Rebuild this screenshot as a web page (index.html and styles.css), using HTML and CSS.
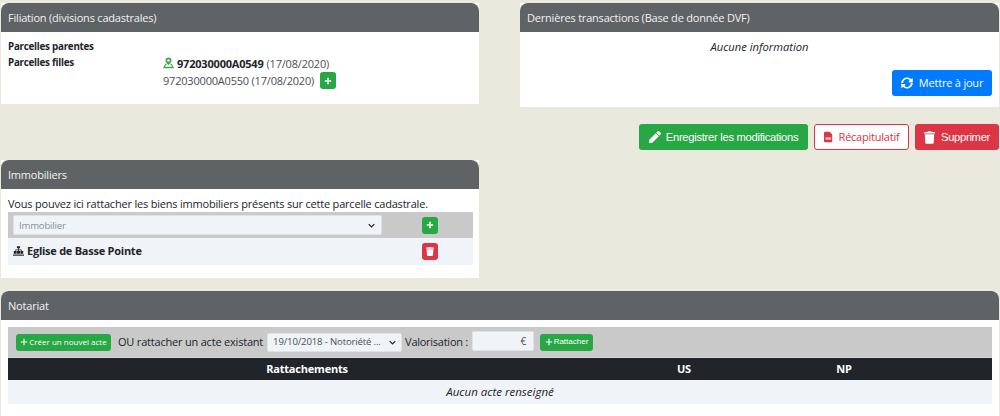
FILE: index.html
```html
<!DOCTYPE html>
<html lang="fr">
<head>
<meta charset="utf-8">
<title>Parcelle</title>
<link rel="stylesheet" href="styles.css">
</head>
<body>
<div class="top-row">
  <section class="panel panel-filiation">
    <h2 class="panel-head">Filiation (divisions cadastrales)</h2>
    <div class="filiation-body">
      <div class="fil-row"><strong class="fil-label">Parcelles parentes</strong></div>
      <div class="fil-row">
        <strong class="fil-label">Parcelles filles</strong>
        <div class="fil-values">
          <div class="fil-line">
            <svg class="pin" viewBox="0 0 16 16"><path d="M8 0a4.400 4.400 0 0 0-4.400 4.400C3.600 7.400 8 11 8 11s4.400-3.600 4.400-6.600A4.400 4.400 0 0 0 8 0zm0 6.300a1.900 1.900 0 1 1 0-3.800 1.900 1.900 0 0 1 0 3.800z"/><path d="M3.200 9.200 0 15.500h16l-3.200-6.300h-2v1.400l1.200 0 1 2.900H3l1-2.900 1.200 0V9.200z"/></svg>
            <strong class="fil-strong">972030000A0549</strong>
            <span>(17/08/2020)</span>
          </div>
          <div class="fil-line">
            <span>972030000A0550 (17/08/2020)</span>
            <span class="btn-mini green fil-add"><svg class="ic-plus" viewBox="0 0 10 10"><path d="M4 1h2v3h3v2H6v3H4V6H1V4h3z"/></svg></span>
          </div>
        </div>
      </div>
    </div>
  </section>
  <section class="panel panel-dvf">
    <h2 class="panel-head">Dernières transactions (Base de donnée DVF)</h2>
    <div class="dvf-body">
      <p class="dvf-empty">Aucune information</p>
      <div class="dvf-actions">
        <span class="btn blue btn-update">
          <svg class="ic" viewBox="0 0 512 512"><path d="M370.700 133.300A168 168 0 0 0 89.800 241.100a12 12 0 0 1-11.900 11H20.600a12 12 0 0 1-11.800-14.200C30.600 114.700 139 24 256 24c66 0 125.900 26.700 169.400 69.800L464 56c15-15 40-4.400 40 17v134a24 24 0 0 1-24 24H345.900c-21.400 0-32-25.900-17-41zM32 296h134.100c21.400 0 32 25.900 17 41l-41.800 41.700a168 168 0 0 0 280.900-107.800 12 12 0 0 1 11.900-11h57.300a12 12 0 0 1 11.800 14.200C481.400 397.300 373 488 256 488c-66 0-125.900-26.700-169.400-69.800L48 456c-15 15-40 4.400-40-17V305a24 24 0 0 1 24-24z"/></svg>
          Mettre à jour
        </span>
      </div>
    </div>
  </section>
</div>

<div class="actions">
  <span class="btn green btn-save">
    <svg class="ic" viewBox="0 0 512 512"><path d="M290.700 93.200 418.800 221.300 140.600 499.500 26.400 512C11.100 513.700-1.700 500.800 0 485.500L12.700 371.300zM498 74.100 437.900 14c-18.700-18.700-49.100-18.700-67.900 0l-56.500 56.500 128.100 128.100L498 142c18.700-18.700 18.700-49.200 0-67.900z"/></svg>
    Enregistrer les modifications
  </span>
  <span class="btn outline-red btn-recap">
    <svg class="ic-pdf" viewBox="0 0 12 14"><path d="M1.500 0H7.500L11 3.500V12.500A1.500 1.500 0 0 1 9.500 14H1.500A1.500 1.500 0 0 1 0 12.500V1.500A1.500 1.500 0 0 1 1.500 0z"/><rect class="pdf-band" x="2" y="7.500" width="7.500" height="3"/></svg>
    Récapitulatif
  </span>
  <span class="btn red btn-del">
    <svg class="ic ic-tall" viewBox="0 0 448 512"><path d="M432 32H312l-9.400-18.700A24 24 0 0 0 281.100 0H166.800a23.700 23.700 0 0 0-21.400 13.300L136 32H16A16 16 0 0 0 0 48v32a16 16 0 0 0 16 16h416a16 16 0 0 0 16-16V48a16 16 0 0 0-16-16zM53.200 467a48 48 0 0 0 47.900 45h245.800a48 48 0 0 0 47.900-45L416 128H32z"/></svg>
    Supprimer
  </span>
</div>

<section class="panel panel-immo">
  <h2 class="panel-head">Immobiliers</h2>
  <div class="immo-body">
    <p class="immo-intro">Vous pouvez ici rattacher les biens immobiliers présents sur cette parcelle cadastrale.</p>
    <div class="immo-form">
      <div class="select select-immo">
        <span class="select-ph">Immobilier</span>
        <svg class="chev" viewBox="0 0 10 6"><path d="M1 1l4 4 4-4"/></svg>
      </div>
      <span class="btn-mini green immo-btn"><svg class="ic-plus" viewBox="0 0 10 10"><path d="M4 1h2v3h3v2H6v3H4V6H1V4h3z"/></svg></span>
    </div>
    <div class="immo-row">
      <div class="immo-name">
        <svg class="ic-site" viewBox="0 0 14 12"><path d="M5 0h4v2.500H7.500V4H11v2h2v3.500H9.500V6H10V5H7.500v1H9v3.500H5V6h1.500V5H4v1h.5v3.500H1V6h2V4h3.500V2.500H5z"/><path d="M0 10.500h14V12H0z"/></svg>
        <strong>Eglise de Basse Pointe</strong>
      </div>
      <span class="btn-mini red immo-btn"><svg class="ic-trash" viewBox="0 0 448 512"><path d="M432 32H312l-9.400-18.700A24 24 0 0 0 281.100 0H166.800a23.700 23.700 0 0 0-21.400 13.300L136 32H16A16 16 0 0 0 0 48v32a16 16 0 0 0 16 16h416a16 16 0 0 0 16-16V48a16 16 0 0 0-16-16zM53.200 467a48 48 0 0 0 47.900 45h245.800a48 48 0 0 0 47.900-45L416 128H32z"/></svg></span>
    </div>
  </div>
</section>

<section class="panel panel-notariat">
  <h2 class="panel-head">Notariat</h2>
  <div class="notariat-body">
    <div class="not-bar">
      <span class="btn-small green btn-new"><svg class="ic-plus-s" viewBox="0 0 10 10"><path d="M4.300 1h1.400v3.300H9v1.400H5.700V9H4.300V5.700H1V4.300h3.300z"/></svg>Créer un nouvel acte</span>
      <span class="not-text not-or">OU rattacher un acte existant</span>
      <div class="select select-acte">
        <span>19/10/2018 - Notoriété ...</span>
        <svg class="chev" viewBox="0 0 10 6"><path d="M1 1l4 4 4-4"/></svg>
      </div>
      <span class="not-text not-val">Valorisation :</span>
      <div class="euro-input">€</div>
      <span class="btn-small green btn-attach"><svg class="ic-plus-s" viewBox="0 0 10 10"><path d="M4.300 1h1.400v3.300H9v1.400H5.700V9H4.300V5.700H1V4.300h3.300z"/></svg>Rattacher</span>
    </div>
    <div class="not-head">
      <span>Rattachements</span>
      <span>US</span>
      <span>NP</span>
      <span></span>
    </div>
    <div class="not-empty">Aucun acte renseigné</div>
  </div>
</section>
</body>
</html>
```

FILE: styles.css
```css
* { box-sizing: border-box; }

html, body { height: 416px; overflow: hidden; }

body {
  margin: 0;
  padding: 3px 1px 0;
  background: #e9e9de;
  color: #212529;
  font-family: "Open Sans", "Liberation Sans", sans-serif;
  font-size: 11px;
  letter-spacing: -.2px;
  line-height: 16px;
}

.top-row {
  display: grid;
  grid-template-columns: 478px 479px;
  column-gap: 41px;
  align-items: start;
}

.panel { background: #fff; }

.panel-head {
  margin: 0;
  height: 29px;
  padding: 0 7px;
  display: flex;
  align-items: center;
  background: #606365;
  border-radius: 8px 8px 0 0;
  color: #f1f1f1;
  font-size: 11px;
  font-weight: 400;
}

.panel-filiation { height: 101px; }
.panel-dvf { height: 104px; }

.filiation-body { padding: 7px 7px 0; }

.fil-row { display: flex; height: 16px; }
.fil-label { width: 155px; flex: none; font-size: 9.800px; letter-spacing: -.25px; font-weight: 700; line-height: 16px; }

.fil-values { color: #4b4f53; }
.fil-line { display: flex; align-items: center; gap: 3px; height: 17px; white-space: nowrap; }
.fil-strong { color: #212529; }

.pin { width: 11px; height: 12px; fill: #3fa64a; margin-bottom: 2px; }

.fil-add { margin-left: 3px; }

.dvf-body { padding: 6px 7px 0; }
.dvf-empty { margin: 0; height: 32px; padding-top: 1px; text-align: center; font-style: italic; font-size: 11.200px; letter-spacing: 0; line-height: 15px; }
.dvf-actions { display: flex; justify-content: flex-end; }

.btn {
  display: inline-flex;
  align-items: center;
  justify-content: center;
  gap: 6px;
  height: 26px;
  border-radius: 3px;
  color: #fff;
  font-family: "Liberation Sans", Arial, sans-serif;
  font-size: 11.200px;
  letter-spacing: -.28px;
  white-space: nowrap;
}

.ic { width: 12px; height: 12px; fill: currentColor; flex: none; }
.ic-tall { width: 11px; height: 13px; }
.ic-pdf { width: 9px; height: 12px; fill: #dc3545; flex: none; }
.pdf-band { fill: #fff; opacity: .7; }

.blue { background: #007bff; }
.green { background: #28a745; }
.red { background: #dc3545; }

.btn-update {
  width: 100px;
  font-family: "Open Sans", sans-serif;
  font-size: 11px;
  letter-spacing: -.2px;
}

.actions {
  display: flex;
  justify-content: flex-end;
  gap: 6px;
  margin-top: 17px;
}
.btn-save { width: 169px; gap: 5px; }
.btn-recap { width: 95px; font-family: "Open Sans", sans-serif; font-size: 11px; letter-spacing: -.23px; }
.btn-del { width: 84px; }
.outline-red { background: #fff; color: #dc3545; border: 1px solid #dc3545; }

.btn-mini {
  display: inline-flex;
  align-items: center;
  justify-content: center;
  width: 16px;
  height: 17px;
  border-radius: 3px;
  flex: none;
}
.ic-plus { width: 8px; height: 8px; fill: #fff; }
.ic-trash { width: 8px; height: 9px; fill: #fff; }

.panel-immo { width: 478px; height: 118px; margin-top: 10px; }

.immo-body { padding: 6px 6px 0 7px; }
.immo-intro { margin: 0; line-height: 17px; white-space: nowrap; }

.immo-form {
  display: flex;
  align-items: center;
  height: 26px;
  background: #c9c9c9;
  padding: 0 35px 0 5px;
}
.immo-btn { margin-left: auto; }

.select {
  display: flex;
  align-items: center;
  justify-content: space-between;
  border: 1px solid #dfe3e8;
  border-radius: 2px;
}
.select-immo {
  width: 369px;
  height: 20px;
  padding: 0 6px 0 5px;
  background: #f0f4f8;
  font-size: 9.600px;
}
.select-ph { color: #8a9097; padding-top: 1px; }
.chev { width: 7px; height: 5px; fill: none; stroke: #212529; stroke-width: 1.800; flex: none; }

.immo-row {
  display: flex;
  align-items: center;
  height: 27px;
  background: #f0f4f8;
  padding: 0 35px 0 5px;
}
.immo-name { display: flex; align-items: center; gap: 3px; margin-bottom: 2px; letter-spacing: -.25px; }
.ic-site { width: 11px; height: 10px; fill: #212529; }

.panel-notariat { margin-top: 13px; height: 125px; border-radius: 8px 8px 0 0; }

.notariat-body { padding: 7px 7px 0; }

.not-bar {
  display: flex;
  align-items: center;
  height: 31px;
  background: #c9c9c9;
  padding: 0 0 0 8px;
  border-bottom: 1px solid #d6d6d6;
}
.not-or { margin-left: 7px; }
.not-val { margin-left: 3px; letter-spacing: -.26px; }

.btn-small {
  display: inline-flex;
  align-items: center;
  justify-content: center;
  height: 17px;
  border-radius: 3px;
  color: #fff;
  font-size: 8px;
  letter-spacing: 0;
  white-space: nowrap;
  gap: 1px;
}
.ic-plus-s { width: 8px; height: 8px; fill: #fff; flex: none; }
.btn-new { width: 95px; }
.btn-attach { width: 53px; margin-left: 6px; font-family: "Liberation Sans", Arial, sans-serif; }

.select-acte {
  width: 135px;
  height: 19px;
  margin-left: 4px;
  padding: 0 5px;
  background: #f0f4f8;
  font-size: 9.600px;
  letter-spacing: -.16px;
  color: #4b4f53;
  white-space: nowrap;
}
.euro-input {
  width: 62px;
  height: 20px;
  margin-left: 4px;
  margin-bottom: 2px;
  padding-right: 7px;
  background: #f0f4f8;
  border: 1px solid #dfe3e8;
  border-radius: 2px;
  text-align: right;
  font-size: 10px;
  line-height: 18px;
  color: #4b4f53;
}

.not-head {
  display: grid;
  grid-template-columns: 598px 156px 164px 66px;
  align-items: center;
  height: 22px;
  background: #212529;
  color: #fff;
  font-weight: 700;
  text-align: center;
}

.not-empty {
  height: 24px;
  background: #f0f4f8;
  text-align: center;
  font-style: italic;
  font-size: 11.500px;
  letter-spacing: 0;
  line-height: 23px;
}
```
